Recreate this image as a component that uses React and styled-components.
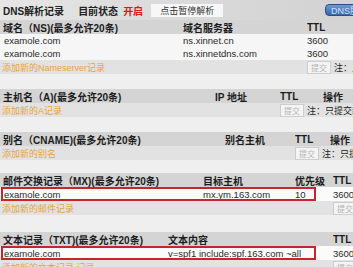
import styled, { createGlobalStyle } from "styled-components";

const GlobalStyle = createGlobalStyle`
  html, body {
    margin: 0;
    padding: 0;
    background: #efefef;
    overflow: hidden;
  }
  body {
    font-family: "Liberation Sans", "Noto Sans CJK SC", sans-serif;
    color: #222;
  }
`;

const Page = styled.div`
  width: 353px;
  height: 267px;
  overflow: hidden;
  background: #efefef;
`;

const TopBar = styled.div`
  height: 20px;
  display: flex;
  align-items: center;
  background: linear-gradient(to right, #e6e6e6 0%, #dcdcdc 40%, #d2d2d2 100%);
  font-size: 10px;
  font-weight: bold;
  white-space: nowrap;
`;

const TopLabel = styled.span`
  margin-left: ${(p) => p.$ml || 0}px;
  color: ${(p) => (p.$red ? "#e0141a" : "#222")};
`;

const PauseButton = styled.div`
  margin-left: 8px;
  width: 72px;
  height: 13px;
  display: flex;
  align-items: center;
  padding-left: 9px;
  box-sizing: border-box;
  background: #f7f7f7;
  font-weight: normal;
  font-size: 9px;
  color: #333;
`;

const DnsButton = styled.div`
  margin-left: auto;
  margin-right: -12px;
  width: 40px;
  height: 12px;
  border-radius: 4px;
  border: 1px solid #2b4f86;
  background: linear-gradient(#6f98d2, #3466ac);
  color: #cfe0f6;
  font-size: 9px;
  font-weight: normal;
  display: flex;
  align-items: center;
  padding-left: 5px;
  box-sizing: border-box;
`;

const Section = styled.section`
  margin-top: ${(p) => p.$gap}px;
`;

const Row = styled.div`
  position: relative;
  display: grid;
  grid-template-columns: ${(p) => p.$cols};
  align-items: center;
  height: ${(p) => p.$h}px;
  background: ${(p) => p.$bg};
  white-space: nowrap;
  overflow: hidden;

  ${(p) =>
    p.$boxed &&
    `
    &::after {
      content: "";
      position: absolute;
      left: 1px;
      top: 0;
      width: 315px;
      height: 100%;
      box-sizing: border-box;
      border: 2px solid #c8242b;
    }
  `}
`;

const HeadCell = styled.div`
  font-size: 10px;
  font-weight: bold;
  color: #1c1c1c;
  padding-left: ${(p) => (p.$first ? 3 : 0)}px;
  overflow: hidden;
`;

const Cell = styled.div`
  font-size: 9.5px;
  color: #2a2a2a;
  padding-left: ${(p) => (p.$first ? 4 : 0)}px;
  overflow: hidden;
`;

const AddLink = styled.div`
  font-size: 9px;
  color: #e9a23b;
  padding-left: 2px;
  overflow: hidden;
`;

const SubmitCell = styled.div`
  grid-column: ${(p) => p.$from} / -1;
  display: flex;
  align-items: center;
  gap: 3px;
  overflow: hidden;
`;

const SubmitButton = styled.div`
  width: 22px;
  height: 11px;
  flex: none;
  border: 1px solid #cdcdcd;
  background: #f4f4f4;
  color: #b5b5b5;
  font-size: 8px;
  display: flex;
  align-items: center;
  justify-content: center;
`;

const Note = styled.span`
  font-size: 9px;
  color: #222;
`;

const sections = [
  {
    gap: 0,
    cols: "183px 124px 1fr",
    head: ["域名（NS)(最多允许20条)", "域名服务器", "TTL"],
    rows: [
      ["examole.com", "ns.xinnet.cn", "3600"],
      ["examole.com", "ns.xinnetdns.com", "3600"],
    ],
    add: "添加新的Nameserver记录",
  },
  {
    gap: 15,
    cols: "215px 65px 43px 1fr",
    head: ["主机名（A)(最多允许20条)", "IP 地址", "TTL", "操作"],
    rows: [],
    add: "添加新的A记录",
  },
  {
    gap: 15,
    cols: "225px 70px 35px 1fr",
    head: ["别名（CNAME)(最多允许20条)", "别名主机", "TTL", "操作"],
    rows: [],
    add: "添加新的别名",
  },
  {
    gap: 13,
    cols: "203px 92px 38px 1fr",
    head: ["邮件交换记录（MX)(最多允许20条)", "目标主机", "优先级", "TTL"],
    rows: [["examole.com", "mx.ym.163.com", "10", "3600"]],
    boxed: true,
    add: "添加新的邮件记录",
  },
  {
    gap: 17,
    cols: "168px 165px 1fr",
    head: ["文本记录（TXT)(最多允许20条)", "文本内容", "TTL"],
    rows: [["examole.com", "v=spf1 include:spf.163.com ~all", "3600"]],
    boxed: true,
    add: "添加新的文本记录 记录",
  },
];

function RecordSection({ s }) {
  const ttlIndex = s.head.indexOf("TTL");
  return (
    <Section $gap={s.gap}>
      <Row $cols={s.cols} $h={14} $bg="#d4d4d4">
        {s.head.map((h, i) => (
          <HeadCell key={i} $first={i === 0}>
            {h}
          </HeadCell>
        ))}
      </Row>
      {s.rows.map((r, ri) => (
        <Row
          key={ri}
          $cols={s.cols}
          $h={s.boxed ? 14 : 13}
          $bg={s.boxed ? "#fbfbfb" : "#f6f6f6"}
          $boxed={s.boxed}
        >
          {r.map((c, i) => (
            <Cell key={i} $first={i === 0}>
              {c}
            </Cell>
          ))}
        </Row>
      ))}
      <Row $cols={s.cols} $h={14} $bg="#e2e2e2">
        <AddLink>{s.add}</AddLink>
        <SubmitCell $from={ttlIndex + 1}>
          <SubmitButton>提交</SubmitButton>
          <Note>注：只提交新添加的记录</Note>
        </SubmitCell>
      </Row>
    </Section>
  );
}

export default function App() {
  return (
    <Page>
      <GlobalStyle />
      <TopBar>
        <TopLabel $ml={3}>DNS解析记录</TopLabel>
        <TopLabel $ml={14}>目前状态</TopLabel>
        <TopLabel $ml={5} $red>
          开启
        </TopLabel>
        <PauseButton>点击暂停解析</PauseButton>
        <DnsButton>DNS服务</DnsButton>
      </TopBar>
      {sections.map((s, i) => (
        <RecordSection key={i} s={s} />
      ))}
    </Page>
  );
}
